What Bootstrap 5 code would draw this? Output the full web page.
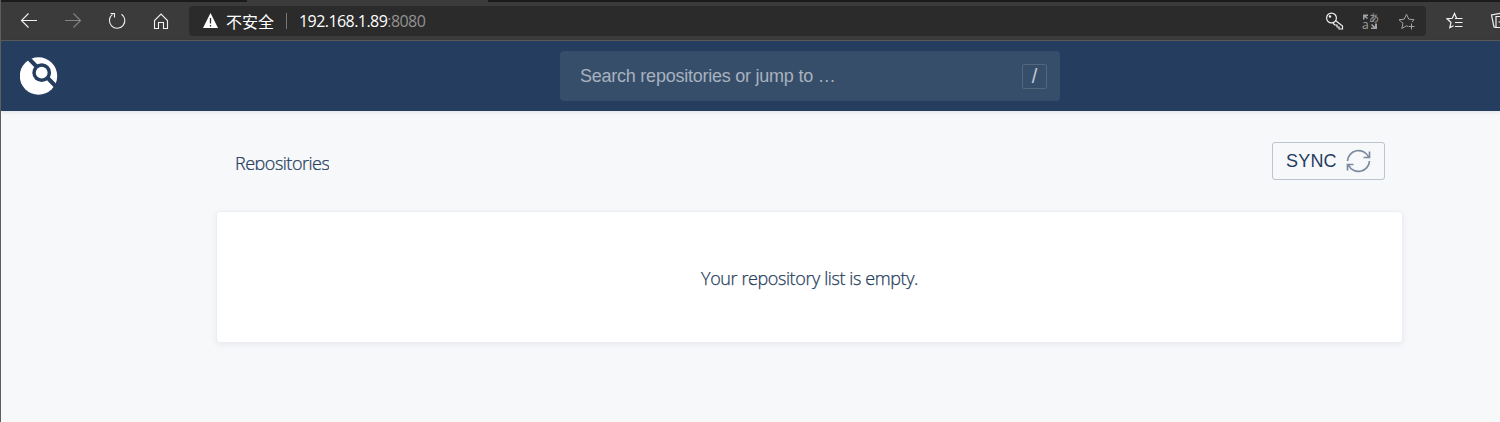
<!DOCTYPE html>
<html lang="en">
<head>
<meta charset="utf-8">
<meta name="viewport" content="width=device-width, initial-scale=1">
<title>Repositories</title>
<link href="https://cdn.jsdelivr.net/npm/bootstrap@5.3.0/dist/css/bootstrap.min.css" rel="stylesheet">
<style>
body{height:422px;overflow:hidden;background:#f7f8fa;border-left:1px solid #5e5e5e;font-family:"Open Sans","Noto Sans",sans-serif;color:#253d5e}
.tabstrip{height:2px;background:#1b1b1b}
.tab-active{margin-left:246px;width:241px;height:2px;background:#3b3b3b}
.toolbar{height:39px;background:#3b3b3b;border-bottom:1px solid #5c5b58;padding-left:16px}
.toolbar svg{flex:none;display:block}
.address{width:1237px;height:30px;background:#2b2b2b;border-radius:4px;margin-left:8px;padding:0 7px 0 12px;color:#fff;flex:none}
.unsafe{font:16px/24px "Noto Sans CJK SC",sans-serif;margin-left:7px;width:49px}
.divider{width:1px;height:16px;background:#777;margin:0 12px 0 11px}
.url{font-size:16px;line-height:22px;letter-spacing:-.56px}
.url span{color:#929292}
.topbar{height:70px;background:#253d5f;padding-left:19px;box-shadow:0 1px 4px rgba(37,61,95,.12)}
.search{width:500px;height:50px;background:#374e6b;border-radius:4px;margin-left:502px;padding:0 13px 0 20px;font:18px/24px "Liberation Sans",sans-serif;color:#a8b2be}
.search-hint{letter-spacing:-.24px}
.slash-key{width:25px;height:25px;border:1px solid #53677f;border-radius:2px;font-size:20px;line-height:23px;color:#c3cad3;text-align:center}
.page{width:1187px;margin-left:215px}
.heading-row{height:100px;padding:0 18px 0 19px}
.light-text{font-size:18px;font-weight:300;-webkit-text-stroke:.25px #253d5e;white-space:nowrap}
.page-title{line-height:24px;margin-top:40px;height:19px;overflow:hidden;letter-spacing:-.49px}
.sync{width:113px;height:38px;margin-top:31px;border:1px solid #bcc4d0;border-radius:3px;background:transparent;font:18px/24px "Liberation Sans",sans-serif;color:#253d5f;padding:0 13px}
.sync span{letter-spacing:.2px}
.panel{height:132px;background:#fff;border:1px solid #eceef3;border-radius:4px;box-shadow:0 2px 6px rgba(37,61,95,.07);padding-top:3px}
.empty-note{letter-spacing:-.4px}
</style>
</head>
<body>
<div class="tabstrip"><div class="tab-active"></div></div>
<div class="toolbar d-flex align-items-center">
  <svg width="164" height="38" fill="none" stroke="#f2f2f2" stroke-width="1.1"><path d="M4.500 18.500H20M11.500 11.500l-7 7 7 7"/><path stroke="#858585" d="M48 18.500h15.500M56.500 11.500l7 7-7 7"/><path d="M104.500 12.200A7.700 7.700 0 1 1 95.500 12.400M93.500 11.500h4v4"/><path d="M137.500 26.500v-8l6.500-6.500 6.500 6.500v8h-4v-6h-5v6z"/></svg>
  <div class="address d-flex align-items-center">
    <svg width="18" height="16"><path d="M9.500 0l7.500 15h-15z" fill="#fff"/><path d="M9.500 5v5.500M9.500 12v1.500" stroke="#2b2b2b" stroke-width="1.300"/></svg>
    <span class="unsafe text-nowrap">不安全</span><span class="divider"></span>
    <span class="url">192.168.1.89<span>:8080</span></span>
    <svg class="ms-auto" width="94" height="20" fill="none" stroke="#a2a2a2">
      <g stroke="#eee" stroke-width="1.200"><circle cx="6.500" cy="7" r="4.900"/><circle cx="5" cy="5.500" r=".7"/><path d="M10.500 9.500l7 5.500v3h-3.500v-2h-2v-2H9.700L8 12"/></g>
      <g fill="#a2a2a2" stroke="none"><text x="44" y="10.500" font-size="10" font-family="Noto Sans CJK JP,sans-serif">あ</text><text x="37" y="18" font-size="12" font-family="Open Sans,sans-serif">a</text><path d="M38 3.500h5v1.500h-2l2 2-1 1-2.500-2v2.500H38zM52 12.500v5.500h-6v-1.500h2.500l-2.500-2.500 1-1 3 2.500v-3z"/></g>
      <path d="M87 11l2-2.300-5.200-.5-2.300-5-2.300 5-5.200.5 4 3.600-1.200 5.200 4.700-2.700 1.500.7M83.500 15.500h6M86.500 12.500v6"/>
    </svg>
  </div>
  <svg width="74" height="22" style="margin-left:20px" fill="none" stroke="#f2f2f2" stroke-width="1.200"><path d="M10.500 8L8.500 3.500l-2.200 4.800-5.300.5 4 3.700-1.200 5.200 3.700-2M9 8.500h7.500M9 12.500h7.500M9 16.500h7.500"/><path d="M50 17.500L48 17l-2.500-12 10-2M58 6.500h-8v11h8M52.500 12H58"/></svg>
</div>
<header class="topbar d-flex align-items-center">
  <svg width="38" height="38" viewBox="19 57 38 38"><circle cx="37.500" cy="76" r="18.700" fill="#fff"/><path d="M26.800 57.500L54.500 86" stroke="#253d5f" stroke-width="4"/><circle cx="40.700" cy="72.700" r="9.400" fill="#253d5f"/><circle cx="40.700" cy="72.700" r="5.900" fill="#fff"/></svg>
  <div class="search d-flex align-items-center justify-content-between"><span class="search-hint">Search repositories or jump to …</span><span class="slash-key">/</span></div>
</header>
<main class="page">
  <div class="heading-row d-flex justify-content-between">
    <h1 class="page-title light-text mb-0">Repositories</h1>
    <button class="sync d-flex align-items-center justify-content-between"><span>SYNC</span><svg width="25" height="24" fill="none" stroke="#7d8ba0" stroke-width="1.700"><path d="M1.500 12A11 11 0 0 1 22.500 8M23.500 2.500v6h-6M23.500 12A11 11 0 0 1 2.500 16M1.500 21.500v-6h6"/></svg></button>
  </div>
  <section class="panel d-flex align-items-center justify-content-center"><span class="light-text empty-note">Your repository list is empty.</span></section>
</main>
<script src="https://cdn.jsdelivr.net/npm/bootstrap@5.3.0/dist/js/bootstrap.bundle.min.js"></script>
</body>
</html>
